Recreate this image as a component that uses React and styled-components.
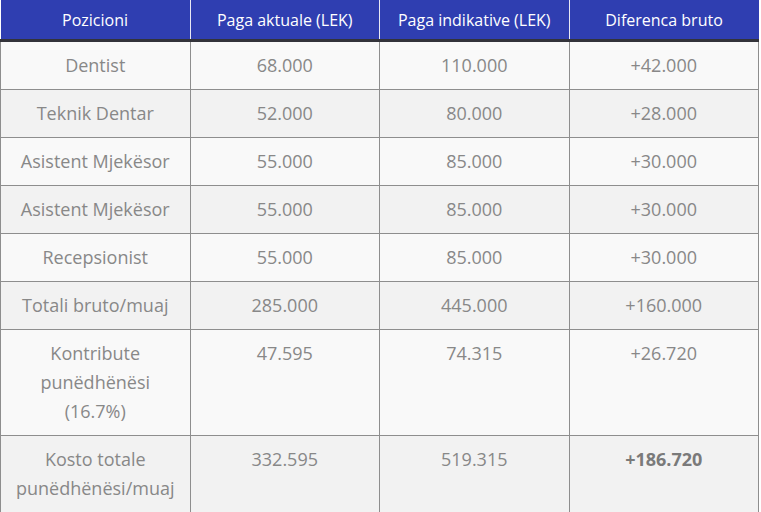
import React from "react";
import styled, { createGlobalStyle } from "styled-components";

const Global = createGlobalStyle`
  html, body { margin: 0; padding: 0; background: #ffffff; }
  body { font-family: "Open Sans", "Noto Sans", Arial, sans-serif; }
`;

const Table = styled.table`
  width: 759px;
  border-collapse: collapse;
  table-layout: fixed;
  font-family: "Open Sans", "Noto Sans", Arial, sans-serif;
`;

const HeadCell = styled.th`
  height: 39px;
  padding: 0 8px;
  background: #2f3eb1;
  color: #ffffff;
  font-size: 16px;
  font-weight: 400;
  text-align: center;
  vertical-align: middle;
  border-left: 1px solid #e8e8f4;
  border-bottom: 3px solid #33333a;
  &:first-child { border-left: none; }
`;

const Row = styled.tr`
  background: ${(p) => (p.$alt ? "#f2f2f2" : "#f9f9f9")};
`;

const Cell = styled.td`
  padding: 9px 8px;
  border: 1px solid #8e8e8e;
  color: #888888;
  font-size: 18px;
  line-height: 29px;
  text-align: center;
  vertical-align: top;
  font-weight: ${(p) => (p.$bold ? 700 : 400)};
  ${(p) => p.$bold && "color: #7a7a7a;"}
`;

const rows = [
  ["Dentist", "68.000", "110.000", "+42.000"],
  ["Teknik Dentar", "52.000", "80.000", "+28.000"],
  ["Asistent Mjekësor", "55.000", "85.000", "+30.000"],
  ["Asistent Mjekësor", "55.000", "85.000", "+30.000"],
  ["Recepsionist", "55.000", "85.000", "+30.000"],
  ["Totali bruto/muaj", "285.000", "445.000", "+160.000"],
  ["Kontribute punëdhënësi (16.7%)", "47.595", "74.315", "+26.720"],
  ["Kosto totale punëdhënësi/muaj", "332.595", "519.315", "+186.720", true],
];

export default function App() {
  return (
    <>
      <Global />
      <Table>
        <thead>
          <tr>
            <HeadCell>Pozicioni</HeadCell>
            <HeadCell>Paga aktuale (LEK)</HeadCell>
            <HeadCell>Paga indikative (LEK)</HeadCell>
            <HeadCell>Diferenca bruto</HeadCell>
          </tr>
        </thead>
        <tbody>
          {rows.map((r, i) => (
            <Row key={i} $alt={i % 2 === 1}>
              <Cell>{r[0]}</Cell>
              <Cell>{r[1]}</Cell>
              <Cell>{r[2]}</Cell>
              <Cell $bold={!!r[4]}>{r[3]}</Cell>
            </Row>
          ))}
        </tbody>
      </Table>
    </>
  );
}
